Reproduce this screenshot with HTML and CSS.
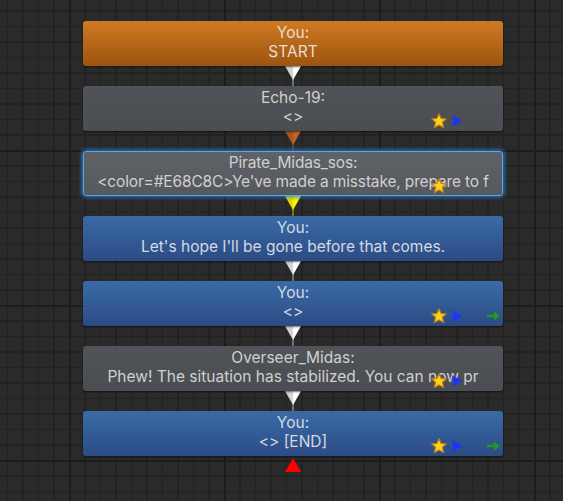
FILE: index.html
```html
<!DOCTYPE html>
<html>
<head>
<meta charset="utf-8">
<link rel="stylesheet" href="styles.css">
</head>
<body>
<div class="canvas">
  <div class="flow">
    <div class="node orange">
      <div class="line">You:</div>
      <div class="line">START</div>
    </div>
    <div class="link">
      <svg width="16" height="20" viewBox="0 0 16 20"><line x1="8" y1="0" x2="8" y2="20" stroke="#b8b8b8" stroke-width="1"/><polygon points="0,0 8,0 8,14" fill="#d4d4d4"/><polygon points="8,0 16,0 8,14" fill="#ffffff"/></svg>
    </div>
    <div class="node gray">
      <div class="line">Echo-19:</div>
      <div class="line">&lt;&gt;</div>
      <svg class="ic star" viewBox="0 0 14 14"><polygon points="7,0.6 8.9,4.8 13.4,5.1 10,8.1 11.1,12.8 7,10.4 2.9,12.8 4,8.1 0.6,5.1 5.1,4.8" fill="#f9d21e" stroke="#c27a10" stroke-width="1" stroke-linejoin="round"/></svg>
      <svg class="ic play" viewBox="0 0 10 12"><polygon points="0,0 10,6 0,12 1.5,6" fill="#1a33ff"/></svg>
    </div>
    <div class="link">
      <svg width="16" height="20" viewBox="0 0 16 20"><line x1="8" y1="0" x2="8" y2="20" stroke="#8a5a3a" stroke-width="1"/><polygon points="0,0 8,0 8,14" fill="#a9541f"/><polygon points="8,0 16,0 8,14" fill="#c0642a"/></svg>
    </div>
    <div class="node gray selected">
      <div class="line tight">&#8203;Pirate_Midas_sos:</div>
      <div class="line tight">&lt;color=#E68C8C&gt;Ye've made a misstake, prepare to f</div>
      <svg class="ic star" viewBox="0 0 14 14"><polygon points="7,0.6 8.9,4.8 13.4,5.1 10,8.1 11.1,12.8 7,10.4 2.9,12.8 4,8.1 0.6,5.1 5.1,4.8" fill="#f9d21e" stroke="#c27a10" stroke-width="1" stroke-linejoin="round"/></svg>
    </div>
    <div class="link">
      <svg width="16" height="20" viewBox="0 0 16 20"><line x1="8" y1="0" x2="8" y2="20" stroke="#c8c000" stroke-width="1"/><polygon points="0,0 8,0 8,14" fill="#e6dc00"/><polygon points="8,0 16,0 8,14" fill="#fff200"/></svg>
    </div>
    <div class="node blue">
      <div class="line">You:</div>
      <div class="line">Let's hope I'll be gone before that comes.</div>
    </div>
    <div class="link">
      <svg width="16" height="20" viewBox="0 0 16 20"><line x1="8" y1="0" x2="8" y2="20" stroke="#b8b8b8" stroke-width="1"/><polygon points="0,0 8,0 8,14" fill="#d4d4d4"/><polygon points="8,0 16,0 8,14" fill="#ffffff"/></svg>
    </div>
    <div class="node blue">
      <div class="line">You:</div>
      <div class="line">&lt;&gt;</div>
      <svg class="ic star" viewBox="0 0 14 14"><polygon points="7,0.6 8.9,4.8 13.4,5.1 10,8.1 11.1,12.8 7,10.4 2.9,12.8 4,8.1 0.6,5.1 5.1,4.8" fill="#f9d21e" stroke="#c27a10" stroke-width="1" stroke-linejoin="round"/></svg>
      <svg class="ic play" viewBox="0 0 10 12"><polygon points="0,0 10,6 0,12 1.5,6" fill="#1a33ff"/></svg>
      <svg class="ic arrow" viewBox="0 0 13 10"><polygon points="0,3.8 7,3.8 7,0.3 13,5 7,9.7 7,6.2 0,6.2" fill="#1d9a1d"/></svg>
    </div>
    <div class="link">
      <svg width="16" height="20" viewBox="0 0 16 20"><line x1="8" y1="0" x2="8" y2="20" stroke="#b8b8b8" stroke-width="1"/><polygon points="0,0 8,0 8,14" fill="#d4d4d4"/><polygon points="8,0 16,0 8,14" fill="#ffffff"/></svg>
    </div>
    <div class="node gray">
      <div class="line">Overseer_Midas:</div>
      <div class="line">Phew! The situation has stabilized. You can now pr</div>
      <svg class="ic star" viewBox="0 0 14 14"><polygon points="7,0.6 8.9,4.8 13.4,5.1 10,8.1 11.1,12.8 7,10.4 2.9,12.8 4,8.1 0.6,5.1 5.1,4.8" fill="#f9d21e" stroke="#c27a10" stroke-width="1" stroke-linejoin="round"/></svg>
      <svg class="ic play" viewBox="0 0 10 12"><polygon points="0,0 10,6 0,12 1.5,6" fill="#1a33ff"/></svg>
    </div>
    <div class="link">
      <svg width="16" height="20" viewBox="0 0 16 20"><line x1="8" y1="0" x2="8" y2="20" stroke="#b8b8b8" stroke-width="1"/><polygon points="0,0 8,0 8,14" fill="#d4d4d4"/><polygon points="8,0 16,0 8,14" fill="#ffffff"/></svg>
    </div>
    <div class="node blue">
      <div class="line">You:</div>
      <div class="line">&lt;&gt; [END]</div>
      <svg class="ic star" viewBox="0 0 14 14"><polygon points="7,0.6 8.9,4.8 13.4,5.1 10,8.1 11.1,12.8 7,10.4 2.9,12.8 4,8.1 0.6,5.1 5.1,4.8" fill="#f9d21e" stroke="#c27a10" stroke-width="1" stroke-linejoin="round"/></svg>
      <svg class="ic play" viewBox="0 0 10 12"><polygon points="0,0 10,6 0,12 1.5,6" fill="#1a33ff"/></svg>
      <svg class="ic arrow" viewBox="0 0 13 10"><polygon points="0,3.8 7,3.8 7,0.3 13,5 7,9.7 7,6.2 0,6.2" fill="#1d9a1d"/></svg>
    </div>
    <div class="end">
      <svg width="16" height="14" viewBox="0 0 16 14"><polygon points="8,0 16,14 0,14" fill="#ff0000"/></svg>
    </div>
  </div>
</div>
</body>
</html>
```
FILE: styles.css
```css
html, body {
  margin: 0;
  padding: 0;
}
body {
  width: 563px;
  height: 501px;
  overflow: hidden;
  background-color: #2a2a2a;
  background-image:
    linear-gradient(to right, #1c1c1c 0 2px, transparent 2px),
    linear-gradient(to bottom, #1c1c1c 0 2px, transparent 2px),
    repeating-linear-gradient(to right, #222222 0 1px, transparent 1px 15.5px),
    repeating-linear-gradient(to bottom, #222222 0 1px, transparent 1px 15.5px);
  background-size: 155px 155px;
  background-position: 69px 150px;
  font-family: Inter, "Noto Sans", sans-serif;
  font-size: 15.5px;
}
.canvas {
  width: 563px;
  height: 501px;
  padding: 21px 0 0 83px;
  box-sizing: border-box;
}
.flow {
  width: 420px;
  display: flex;
  flex-direction: column;
}
.node {
  position: relative;
  height: 45px;
  box-sizing: border-box;
  border-radius: 3px;
  padding: 2px 6px 0;
  text-align: center;
  line-height: 19px;
  white-space: nowrap;
  box-shadow: 0 1px 2px rgba(0, 0, 0, 0.55);
}
.line {
  overflow: visible;
}
.tight {
  letter-spacing: -0.15px;
}
.orange {
  background: linear-gradient(to bottom, #d07a22, #9c540f);
  color: #e8ddd2;
}
.gray {
  background: linear-gradient(to bottom, #505357, #4a4d51);
  color: #d0d0d0;
}
.selected {
  background: linear-gradient(to bottom, #5f6266, #55585c);
  border: 1px solid #5aa6ea;
  padding: 1px 2px 0;
  box-shadow: 0 0 4px 1px #2d7fd2;
}
.blue {
  background: linear-gradient(to bottom, #3a6ba7, #2c4b84);
  color: #d4d9e2;
}
.link {
  height: 20px;
  display: flex;
  justify-content: center;
}
.link svg {
  display: block;
}
.end {
  display: flex;
  justify-content: center;
  padding-top: 2px;
}
.end svg {
  display: block;
}
.ic {
  position: absolute;
  display: block;
}
.star {
  width: 16px;
  height: 16px;
  right: 56px;
  bottom: 2px;
}
.selected .star {
  right: 55px;
  bottom: 1px;
}
.play {
  width: 10px;
  height: 12px;
  right: 41px;
  bottom: 4px;
}
.arrow {
  width: 13px;
  height: 10px;
  right: 3px;
  bottom: 5px;
}
```
